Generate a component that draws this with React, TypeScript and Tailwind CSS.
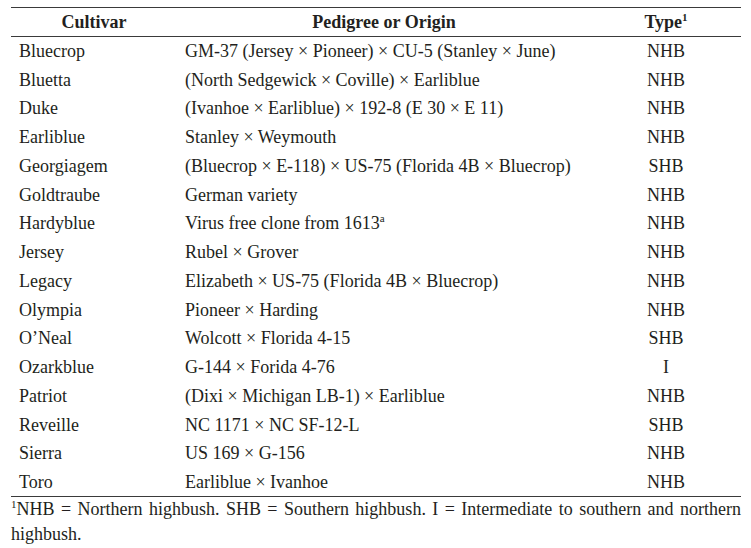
import React from "react";

type Row = {
  cultivar: string;
  pedigree: React.ReactNode;
  type: string;
};

const rows: Row[] = [
  { cultivar: "Bluecrop", pedigree: "GM-37 (Jersey × Pioneer) × CU-5 (Stanley × June)", type: "NHB" },
  { cultivar: "Bluetta", pedigree: "(North Sedgewick × Coville) × Earliblue", type: "NHB" },
  { cultivar: "Duke", pedigree: "(Ivanhoe × Earliblue) × 192-8 (E 30 × E 11)", type: "NHB" },
  { cultivar: "Earliblue", pedigree: "Stanley × Weymouth", type: "NHB" },
  { cultivar: "Georgiagem", pedigree: "(Bluecrop × E-118) × US-75 (Florida 4B × Bluecrop)", type: "SHB" },
  { cultivar: "Goldtraube", pedigree: "German variety", type: "NHB" },
  {
    cultivar: "Hardyblue",
    pedigree: (
      <>
        Virus free clone from 1613<sup className="text-[11px] -top-[7px]">a</sup>
      </>
    ),
    type: "NHB",
  },
  { cultivar: "Jersey", pedigree: "Rubel × Grover", type: "NHB" },
  { cultivar: "Legacy", pedigree: "Elizabeth × US-75 (Florida 4B × Bluecrop)", type: "NHB" },
  { cultivar: "Olympia", pedigree: "Pioneer × Harding", type: "NHB" },
  { cultivar: "O’Neal", pedigree: "Wolcott × Florida 4-15", type: "SHB" },
  { cultivar: "Ozarkblue", pedigree: "G-144 × Forida 4-76", type: "I" },
  { cultivar: "Patriot", pedigree: "(Dixi × Michigan LB-1) × Earliblue", type: "NHB" },
  { cultivar: "Reveille", pedigree: "NC 1171 × NC SF-12-L", type: "SHB" },
  { cultivar: "Sierra", pedigree: "US 169 × G-156", type: "NHB" },
  { cultivar: "Toro", pedigree: "Earliblue × Ivanhoe", type: "NHB" },
];

const serif = "font-['Liberation_Serif','Times_New_Roman',serif]";

export default function App() {
  return (
    <div className={`min-h-[548px] w-[751px] bg-white pl-[11px] pt-[7px] text-[18px] text-[#231f20] ${serif}`}>
      <div className="w-[730px]">
        <table className={`w-full table-fixed border-collapse ${serif}`}>
          <colgroup>
            <col className="w-[166px]" />
            <col className="w-[414px]" />
            <col className="w-[150px]" />
          </colgroup>
          <thead>
            <tr className="h-[29px] border-t border-b border-[#3a3a3a]">
              <th className={`p-0 text-center font-bold leading-none ${serif}`}>Cultivar</th>
              <th className={`p-0 text-center font-bold leading-none ${serif}`}>Pedigree or Origin</th>
              <th className={`p-0 text-center font-bold leading-none ${serif}`}>
                Type<sup className="text-[11px] -top-[7px]">1</sup>
              </th>
            </tr>
          </thead>
          <tbody>
            {rows.map((row, i) => (
              <tr
                key={row.cultivar}
                className={i === rows.length - 1 ? "h-[28.75px] border-b border-[#3a3a3a]" : "h-[28.75px]"}
              >
                <td className="p-0 pl-[8px] leading-none whitespace-nowrap">{row.cultivar}</td>
                <td className="p-0 pl-[8px] leading-none whitespace-nowrap">{row.pedigree}</td>
                <td className="p-0 text-center leading-none">{row.type}</td>
              </tr>
            ))}
          </tbody>
        </table>
        <p className="text-justify leading-[25px]">
          <sup className="text-[11px] -top-[7px]">1</sup>NHB = Northern highbush. SHB = Southern highbush. I =
          Intermediate to southern and northern highbush.
        </p>
      </div>
    </div>
  );
}
